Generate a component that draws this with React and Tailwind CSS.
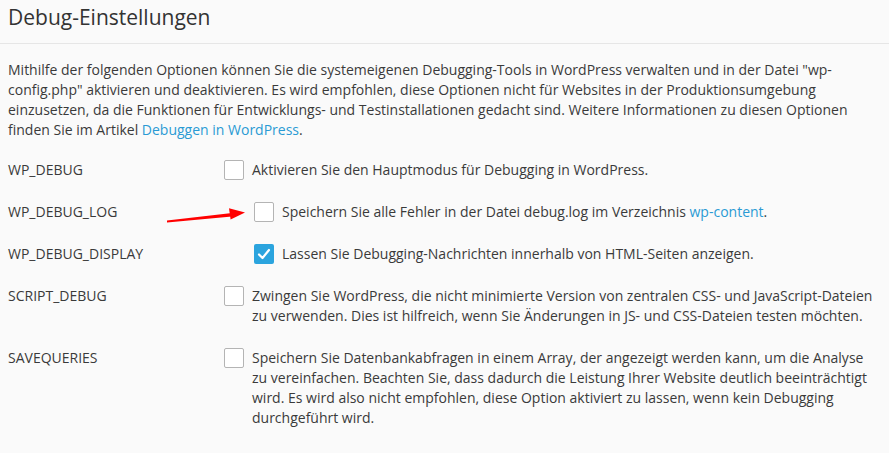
import React from 'react';

const options = [
  {
    key: 'WP_DEBUG',
    checked: false,
    indent: false,
    text: 'Aktivieren Sie den Hauptmodus für Debugging in WordPress.',
  },
  {
    key: 'WP_DEBUG_LOG',
    checked: false,
    indent: true,
    arrow: true,
    text: (
      <>
        Speichern Sie alle Fehler in der Datei debug.log im Verzeichnis{' '}
        <a href="#" className="text-[#2a9ad4]">wp-content</a>.
      </>
    ),
  },
  {
    key: 'WP_DEBUG_DISPLAY',
    checked: true,
    indent: true,
    text: 'Lassen Sie Debugging-Nachrichten innerhalb von HTML-Seiten anzeigen.',
  },
  {
    key: 'SCRIPT_DEBUG',
    checked: false,
    indent: false,
    text: 'Zwingen Sie WordPress, die nicht minimierte Version von zentralen CSS- und JavaScript-Dateien zu verwenden. Dies ist hilfreich, wenn Sie Änderungen in JS- und CSS-Dateien testen möchten.',
  },
  {
    key: 'SAVEQUERIES',
    checked: false,
    indent: false,
    text: 'Speichern Sie Datenbankabfragen in einem Array, der angezeigt werden kann, um die Analyse zu vereinfachen. Beachten Sie, dass dadurch die Leistung Ihrer Website deutlich beeinträchtigt wird. Es wird also nicht empfohlen, diese Option aktiviert zu lassen, wenn kein Debugging durchgeführt wird.',
  },
];

const Checkbox = ({ checked }) =>
  checked ? (
    <span className="w-5 h-5 shrink-0 rounded-[2px] bg-[#2ba4de] flex items-center justify-center">
      <svg width="20" height="20" viewBox="0 0 20 20" fill="none">
        <path d="M5 10.5 L8.5 14 L15 6" stroke="white" strokeWidth="2.2" strokeLinecap="round" strokeLinejoin="round" />
      </svg>
    </span>
  ) : (
    <span className="w-5 h-5 shrink-0 rounded-[2px] bg-white border border-[#b4b4b4]" />
  );

// red annotation arrow pointing at the WP_DEBUG_LOG checkbox
const RedArrow = () => (
  <svg className="absolute left-[144px] top-[-2px]" width="100" height="26" viewBox="0 0 100 26">
    <polygon points="15,20.6 15,22.6 80,16.4 80,13" fill="#f00" />
    <polygon points="93,12.6 77,8.2 78.6,19.4" fill="#f00" />
  </svg>
);

export default function App() {
  return (
    <div className="min-h-[453px] w-[889px] bg-[#fafafa] text-[14px] leading-5 text-[#3a3a3a]" style={{ fontFamily: '"Open Sans", "Noto Sans", sans-serif' }}>
      <div className="h-[44px] border-b border-[#e6e6e6] px-2 pt-[3px]">
        <h1 className="text-[21px] leading-7 text-[#333]">Debug-Einstellungen</h1>
      </div>

      <div className="px-2 pt-4">
        <p>
          Mithilfe der folgenden Optionen können Sie die systemeigenen Debugging-Tools in WordPress verwalten und in der Datei "wp-config.php" aktivieren und deaktivieren. Es wird empfohlen, diese Optionen nicht für Websites in der Produktionsumgebung einzusetzen, da die Funktionen für Entwicklungs- und Testinstallationen gedacht sind. Weitere Informationen zu diesen Optionen finden Sie im Artikel{' '}
          <a href="#" className="text-[#2a9ad4]">Debuggen in WordPress</a>.
        </p>

        <div className="mt-5 flex flex-col gap-[22px]">
          {options.map((o) => (
            <div key={o.key} className="relative flex">
              <div className="w-[216px] shrink-0">{o.key}</div>
              <div className={`flex gap-2 ${o.indent ? 'pl-[30px]' : ''}`}>
                <Checkbox checked={o.checked} />
                <div className="pr-2">{o.text}</div>
              </div>
              {o.arrow && <RedArrow />}
            </div>
          ))}
        </div>
      </div>
    </div>
  );
}
